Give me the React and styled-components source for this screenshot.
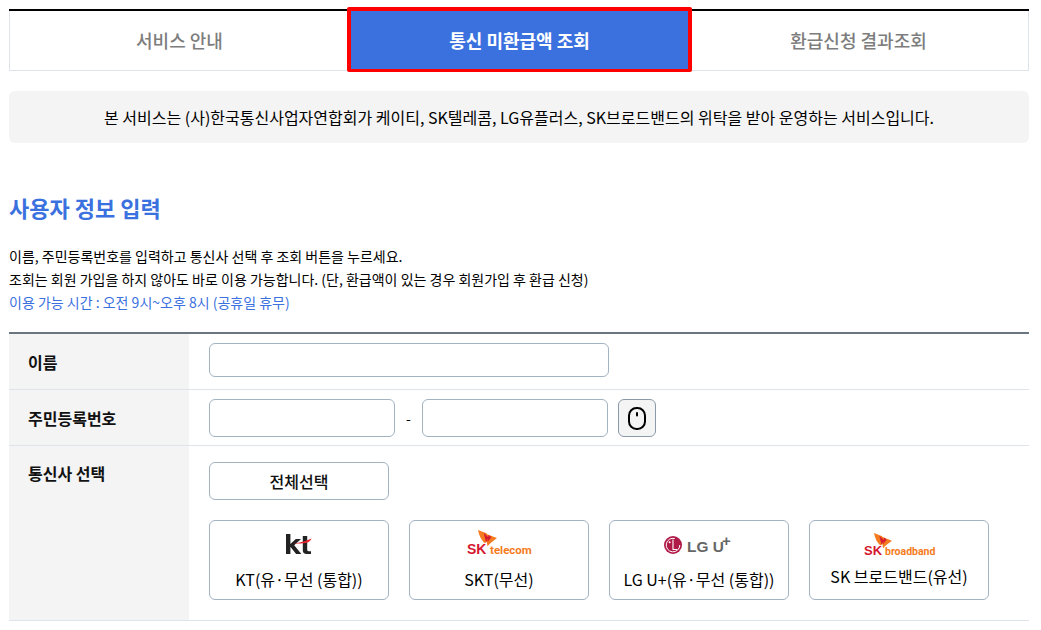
import React from "react";
import styled, { createGlobalStyle } from "styled-components";

const Global = createGlobalStyle`
  html, body { margin: 0; padding: 0; background: #fff; }
  body { font-family: "Noto Sans CJK KR", "Noto Sans", sans-serif; color: #000; overflow: hidden; }
  * { box-sizing: border-box; }
`;

const Page = styled.div`
  width: 1041px;
  height: 630px;
  padding: 9px 12px 0 9px;
  overflow: hidden;
`;

const Tabs = styled.div`
  display: flex;
  height: 62px;
  border-top: 2px solid #000;
`;

const Tab = styled.div`
  flex: 0 0 340px;
  display: flex;
  align-items: center;
  justify-content: center;
  padding-bottom: 1px;
  font-size: 18px;
  font-weight: 500;
  color: #7d7d7d;
  background: #fff;
  border-bottom: 1px solid #dee4ea;
  border-left: ${(p) => (p.$side === "left" ? "1px solid #dee4ea" : "0")};
  border-right: ${(p) => (p.$side === "right" ? "1px solid #dee4ea" : "0")};
`;

const ActiveTab = styled.div`
  flex: 0 0 345px;
  margin: -4px -3px -1px -2px;
  display: flex;
  align-items: center;
  justify-content: center;
  padding-bottom: 1px;
  font-size: 18px;
  font-weight: 700;
  color: #fff;
  background: #3a71df;
  border: 4px solid #f00;
  border-bottom-width: 3px;
  border-radius: 2px;
  position: relative;
  z-index: 1;
`;

const Notice = styled.div`
  margin-top: 20px;
  height: 52px;
  border-radius: 6px;
  background: #f4f4f4;
  display: flex;
  align-items: center;
  justify-content: center;
  font-size: 16px;
  color: #000;
`;

const Heading = styled.h2`
  margin: 47px 0 0;
  font-size: 22px;
  line-height: 34px;
  font-weight: 700;
  color: #3a71df;
`;

const Desc = styled.div`
  margin-top: 20.6px;
  font-size: 14px;
  line-height: 23.2px;
`;

const DescLine = styled.div`
  color: ${(p) => p.$color || "#000"};
`;

const Table = styled.div`
  margin-top: 17.8px;
  border-top: 2px solid #6b7580;
`;

const Row = styled.div`
  display: flex;
  height: ${(p) => p.$h}px;
  border-bottom: 1px solid #dee4ea;
`;

const Label = styled.div`
  flex: 0 0 180px;
  background: #f4f4f4;
  padding: ${(p) => p.$top}px 0 0 19px;
  font-size: 16px;
  line-height: 22px;
  font-weight: 700;
  color: #111;
`;

const Cell = styled.div`
  flex: 1;
  padding: ${(p) => p.$pad}px 0 0 20px;
`;

const Input = styled.input`
  display: block;
  width: ${(p) => p.$w}px;
  height: ${(p) => p.$h}px;
  border: 1px solid #a3b3c2;
  border-radius: 6px;
  background: #fff;
  padding: 0 10px;
  outline: none;
`;

const InlineRow = styled.div`
  display: flex;
  align-items: center;
`;

const Dash = styled.span`
  width: 27px;
  text-align: center;
  font-size: 14px;
  color: #000;
`;

const KeyButton = styled.button`
  width: 38px;
  height: 38px;
  margin-left: 10px;
  padding: 0;
  border: 1px solid #8c9aa8;
  border-radius: 6px;
  background: #f4f4f4;
  display: flex;
  align-items: center;
  justify-content: center;
  color: #000;
`;

const SelectAll = styled.button`
  display: block;
  width: 180px;
  height: 38px;
  padding: 0;
  border: 1px solid #a3b3c2;
  border-radius: 6px;
  background: #fff;
  font-family: inherit;
  font-size: 16px;
  font-weight: 500;
  color: #111;
`;

const Cards = styled.div`
  display: flex;
  gap: 20px;
  margin-top: 20px;
`;

const Card = styled.button`
  width: 180px;
  height: 80px;
  padding: ${(p) => p.$top}px 0 0;
  border: 1px solid #a3b3c2;
  border-radius: 6px;
  background: #fff;
  font-family: inherit;
  font-size: 16px;
  color: #000;
  display: flex;
  flex-direction: column;
  align-items: center;
  justify-content: flex-start;
`;

const LogoBox = styled.div`
  height: ${(p) => p.$h}px;
  margin-bottom: ${(p) => p.$gap}px;
  display: flex;
  align-items: flex-start;
  justify-content: center;
`;

const CardText = styled.span`
  line-height: 22px;
  white-space: nowrap;
`;

const MouseIcon = () => (
  <svg width="24" height="24" viewBox="0 0 24 24" fill="none" stroke="currentColor" strokeWidth="2" strokeLinecap="round">
    <rect x="4" y="2" width="16" height="21" rx="7.5" />
    <path d="M12 7v2.5" />
  </svg>
);

const KtLogo = () => (
  <svg width="27" height="22" viewBox="1 0 27 22">
    <path d="M1 1h4.4v10l5.4-5h5.2l-6.8 6.2L16.4 21h-5.3l-5.7-7.2V21H1z" fill="#222" />
    <path d="M17.8 3h4.4v13.8c0 .9.5 1.4 1.4 1.4H26V21h-4.2c-2.7 0-4-1.3-4-3.8z" fill="#222" />
    <path d="M8.5 10.5C15 10 21 8 26.5 5.5c-1 2.8-3 4-6 4.4-4 .5-8.5.9-12 .6z" fill="#e8202a" />
  </svg>
);

const Wing = ({ x = 0, y = 0, s = 1 }) => (
  <g transform={`translate(${x} ${y}) scale(${s})`}>
    <path d="M0 0l9 3.5 3.5 6.5-5.5 4C3.5 10.5 1 6 0 0z" fill="#f47b20" />
    <path d="M8 4l12 4.5-7 5.5-3 3z" fill="#f47b20" />
    <path d="M6 3l5 5-2.5 5z" fill="#d5182f" />
    <path d="M11 5l3 2.5-4 5z" fill="#d5182f" />
  </g>
);

const SktLogo = () => (
  <svg width="76" height="29" viewBox="-6 0 76 29">
    <Wing x={11} y={0} s={0.95} />
    <text x="0" y="24" fontFamily="Liberation Sans, sans-serif" fontSize="14" fontWeight="700" fill="#d5182f">SK</text>
    <text x="23" y="24" fontFamily="Roboto, sans-serif" fontSize="11.5" fontWeight="700" fill="#f47b20">telecom</text>
  </svg>
);

const BroadbandLogo = () => (
  <svg width="82" height="27" viewBox="-6 0 82 27">
    <Wing x={10} y={0} s={0.9} />
    <text x="0" y="22" fontFamily="Liberation Sans, sans-serif" fontSize="13" fontWeight="700" fill="#d5182f">SK</text>
    <text x="21" y="22" fontFamily="Roboto, sans-serif" fontSize="10.5" fontWeight="700" fill="#f47b20">broadband</text>
  </svg>
);

const LgLogo = () => (
  <svg width="70" height="28" viewBox="0 -6 70 28">
    <circle cx="9" cy="9" r="9" fill="#b01a47" />
    <circle cx="5.6" cy="6.2" r="1" fill="#fff" />
    <path d="M9 3.5v10h4" stroke="#fff" strokeWidth="1.1" fill="none" />
    <path d="M15.8 9a6.8 6.8 0 1 1-5-6.5" stroke="#fff" strokeWidth="1" fill="none" />
    <text x="23" y="15.5" fontFamily="Liberation Sans, sans-serif" fontSize="15.4" fontWeight="700" fill="#666">LG U</text>
  </svg>
);

const LgPlus = styled.span`
  position: absolute;
  left: 112px;
  top: 12px;
  font-family: "Liberation Sans", sans-serif;
  font-size: 15px;
  line-height: 15px;
  font-weight: 700;
  color: #666;
`;

const LgCard = styled(Card)`
  position: relative;
`;

export default function App() {
  return (
    <Page>
      <Global />
      <Tabs>
        <Tab $side="left">서비스 안내</Tab>
        <ActiveTab>통신 미환급액 조회</ActiveTab>
        <Tab $side="right">환급신청 결과조회</Tab>
      </Tabs>
      <Notice>본 서비스는 (사)한국통신사업자연합회가 케이티, SK텔레콤, LG유플러스, SK브로드밴드의 위탁을 받아 운영하는 서비스입니다.</Notice>
      <Heading>사용자 정보 입력</Heading>
      <Desc>
        <DescLine>이름, 주민등록번호를 입력하고 통신사 선택 후 조회 버튼을 누르세요.</DescLine>
        <DescLine>조회는 회원 가입을 하지 않아도 바로 이용 가능합니다. (단, 환급액이 있는 경우 회원가입 후 환급 신청)</DescLine>
        <DescLine $color="#3a71df">이용 가능 시간 : 오전 9시~오후 8시 (공휴일 휴무)</DescLine>
      </Desc>
      <Table>
        <Row $h={56}>
          <Label $top={17}>이름</Label>
          <Cell $pad={9}>
            <Input $w={400} $h={34} />
          </Cell>
        </Row>
        <Row $h={56}>
          <Label $top={17}>주민등록번호</Label>
          <Cell $pad={9}>
            <InlineRow>
              <Input $w={186} $h={38} />
              <Dash>-</Dash>
              <Input $w={186} $h={38} />
              <KeyButton>
                <MouseIcon />
              </KeyButton>
            </InlineRow>
          </Cell>
        </Row>
        <Row $h={175}>
          <Label $top={16}>통신사 선택</Label>
          <Cell $pad={16}>
            <SelectAll>전체선택</SelectAll>
            <Cards>
              <Card $top={12}>
                <LogoBox $h={22} $gap={13}><KtLogo /></LogoBox>
                <CardText>KT(유·무선 (통합))</CardText>
              </Card>
              <Card $top={9}>
                <LogoBox $h={25} $gap={13}><SktLogo /></LogoBox>
                <CardText>SKT(무선)</CardText>
              </Card>
              <LgCard $top={9}>
                <LogoBox $h={24} $gap={14}><LgLogo /></LogoBox>
                <LgPlus>+</LgPlus>
                <CardText>LG U+(유·무선 (통합))</CardText>
              </LgCard>
              <Card $top={12}>
                <LogoBox $h={23} $gap={9}><BroadbandLogo /></LogoBox>
                <CardText>SK 브로드밴드(유선)</CardText>
              </Card>
            </Cards>
          </Cell>
        </Row>
      </Table>
    </Page>
  );
}
